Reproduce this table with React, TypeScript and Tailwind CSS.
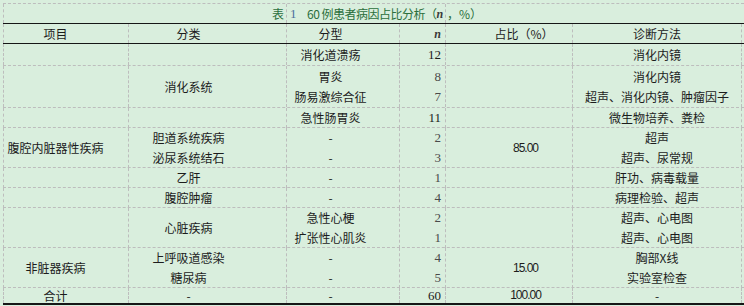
import React from 'react';

type Row = {
  h: string;
  item?: string;
  cat?: string[];
  type?: string[];
  n: string[];
  pct?: string;
  diag: string[];
  last?: boolean;
};

const rows: Row[] = [
  { h: 'h-[22px]', type: ['消化道溃疡'], n: ['12'], diag: ['消化内镜'] },
  { h: 'h-[42px]', cat: ['消化系统'], type: ['胃炎', '肠易激综合征'], n: ['8', '7'], diag: ['消化内镜', '超声、消化内镜、肿瘤因子'] },
  { h: 'h-[20px]', type: ['急性肠胃炎'], n: ['11'], diag: ['微生物培养、粪检'] },
  {
    h: 'h-[40px]',
    item: '腹腔内脏器性疾病',
    cat: ['胆道系统疾病', '泌尿系统结石'],
    type: ['-', '-'],
    n: ['2', '3'],
    pct: '85.00',
    diag: ['超声', '超声、尿常规'],
  },
  { h: 'h-[20px]', cat: ['乙肝'], type: ['-'], n: ['1'], diag: ['肝功、病毒载量'] },
  { h: 'h-[20px]', cat: ['腹腔肿瘤'], type: ['-'], n: ['4'], diag: ['病理检验、超声'] },
  { h: 'h-[40px]', cat: ['心脏疾病'], type: ['急性心梗', '扩张性心肌炎'], n: ['2', '1'], diag: ['超声、心电图', '超声、心电图'] },
  {
    h: 'h-[40px]',
    item: '非脏器疾病',
    cat: ['上呼吸道感染', '糖尿病'],
    type: ['-', '-'],
    n: ['4', '5'],
    pct: '15.00',
    diag: ['胸部X线', '实验室检查'],
  },
  { h: 'h-[17px]', item: '合计', cat: ['-'], type: ['-'], n: ['60'], pct: '100.00', diag: ['-'], last: true },
];

const cols = 'grid grid-cols-[125px_158px_113px_46px_127px_170px]';
const cell = 'border-l border-dashed border-[#bdbdbd] flex flex-col justify-center';

function Lines({ items, tight, className = '' }: { items?: string[]; tight?: boolean; className?: string }) {
  if (!items) return null;
  return (
    <>
      {items.map((t, i) => (
        <div
          key={i}
          className={`${tight ? 'h-[15px] leading-[15px]' : 'h-[20px] leading-[20px]'} whitespace-nowrap ${className}`}
        >
          {t}
        </div>
      ))}
    </>
  );
}

export default function App() {
  return (
    <div className="w-[744px] h-[306px] bg-[#d9eedd] pt-[3px] pl-[3px] text-[12px] text-[#1c1c1c] font-['Noto_Sans_CJK_SC','Noto_Sans',sans-serif] overflow-hidden">
      <div className="w-[741px] border-t border-dashed border-[#bdbdbd]">
        {/* title */}
        <div className={`${cols} h-[19px] text-[#2b6e3c]`}>
          <div className={`${cell} col-span-2 items-end pr-[2px] leading-[18px]`}>表</div>
          <div className={`${cell} col-span-2 flex-row items-center justify-start pl-[3px] leading-[18px] whitespace-nowrap tracking-[-0.5px]`}>
            <span className="text-[#4a6f9c] font-['Liberation_Serif',serif] text-[13px]">1</span>
            <span className="ml-[11px]">60 例患者病因占比分析（</span>
            <span className="italic font-bold font-['Liberation_Serif',serif] text-[#3a3a3a]">n</span>
          </div>
          <div className={`${cell} col-span-2 flex-row items-center justify-start pl-[1px] leading-[18px] whitespace-nowrap`}>
            ，%）
          </div>
        </div>

        {/* header */}
        <div className={`${cols} h-[21px] border-t border-b border-[#161616]`}>
          <div className={`${cell} items-center pr-[21px]`}>项目</div>
          <div className={`${cell} items-center pr-[38px]`}>分类</div>
          <div className={`${cell} items-center pr-[25px]`}>分型</div>
          <div className={`${cell} items-end pr-[4px]`}>
            <span className="italic font-bold font-['Liberation_Serif',serif] text-[#3a3a3a]">n</span>
          </div>
          <div className={`${cell} items-center pl-[30px]`}>占比（%）</div>
          <div className={`${cell} items-center border-r`}>诊断方法</div>
        </div>

        {rows.map((r, i) => (
          <div
            key={i}
            className={`${cols} ${r.h} border-b ${r.last ? 'border-solid border-b-2 border-[#161616]' : 'border-dashed border-[#bdbdbd]'}`}
          >
            <div className={`${cell} items-center pr-[21px] ${r.last ? 'leading-[15px]' : ''}`}>{r.item}</div>
            <div className={`${cell} items-center pr-[38px]`}>
              <Lines items={r.cat} tight={r.last} />
            </div>
            <div className={`${cell} items-center pr-[25px]`}>
              <Lines items={r.type} tight={r.last} />
            </div>
            <div className={`${cell} items-end pr-[4px] font-['Liberation_Serif',serif] text-[13px]`}>
              <Lines items={r.n} tight={r.last} className={r.n[0].length === 1 ? 'text-[#4a4a4a]' : 'text-[#1c1c1c]'} />
            </div>
            <div className={`${cell} items-center pl-[33px] font-['Liberation_Sans',sans-serif] tracking-[-1px] ${r.last ? 'leading-[15px]' : ''}`}>
              {r.pct}
            </div>
            <div className={`${cell} items-center border-r`}>
              <Lines items={r.diag} tight={r.last} />
            </div>
          </div>
        ))}
      </div>
    </div>
  );
}
